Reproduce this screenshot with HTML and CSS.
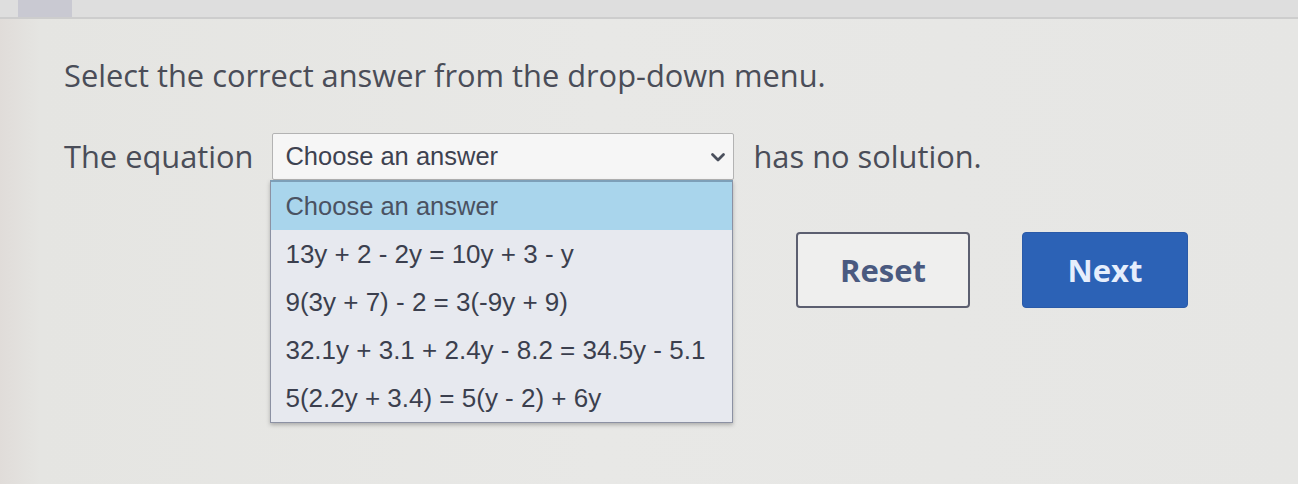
FILE: index.html
```html
<!DOCTYPE html>
<html>
<head>
<meta charset="utf-8">
<link rel="stylesheet" href="styles.css">
</head>
<body>
<div class="topbar"><div class="tab"></div></div>
<main class="content">
  <p class="prompt">Select the correct answer from the drop-down menu.</p>
  <div class="question">
    <span class="label">The equation</span>
    <div class="select-wrap">
      <div class="select">
        <span class="select-text">Choose an answer</span>
        <svg class="chev" width="16" height="11" viewBox="0 0 16 11"><path d="M2.5 2.5 L8 8 L13.5 2.5" fill="none" stroke="#4a4f5c" stroke-width="2.8" stroke-linecap="round" stroke-linejoin="round"/></svg>
      </div>
      <ul class="menu">
        <li class="opt active">Choose an answer</li>
        <li class="opt">13y + 2 - 2y = 10y + 3 - y</li>
        <li class="opt">9(3y + 7) - 2 = 3(-9y + 9)</li>
        <li class="opt">32.1y + 3.1 + 2.4y - 8.2 = 34.5y - 5.1</li>
        <li class="opt">5(2.2y + 3.4) = 5(y - 2) + 6y</li>
      </ul>
    </div>
    <span class="label">has no solution.</span>
  </div>
  <div class="actions">
    <button class="btn btn-reset">Reset</button>
    <button class="btn btn-next">Next</button>
  </div>
</main>
</body>
</html>
```
FILE: styles.css
```css
html, body {
  margin: 0;
  padding: 0;
}
body {
  width: 1298px;
  height: 484px;
  overflow: hidden;
  background: linear-gradient(90deg, #e0dcd9 0px, #e5e5e2 40px, #e8e8e6 600px, #e6e6e4 1298px);
  font-family: "Open Sans", "Noto Sans", sans-serif;
  color: #4a4d58;
}
.topbar {
  height: 17px;
  background: #dedede;
  border-bottom: 2px solid #cdcdcd;
  padding-left: 18px;
}
.tab {
  width: 54px;
  height: 17px;
  background: #c9c9d2;
}
.content {
  padding-left: 64px;
}
.prompt {
  margin: 36px 0 0 0;
  font-size: 30.8px;
  line-height: 40px;
}
.question {
  display: flex;
  align-items: center;
  margin-top: 37px;
  height: 48px;
}
.label {
  font-size: 30.8px;
  line-height: 40px;
}
.select-wrap {
  position: relative;
  margin: 0 19px 0 19px;
}
.select {
  width: 441px;
  height: 45px;
  background: #f6f6f6;
  border: 1px solid #b3b3b3;
  border-radius: 2px;
  display: flex;
  align-items: center;
  justify-content: space-between;
  padding: 0 7px 0 12px;
}
.select-text {
  font-family: "Liberation Sans", Arial, sans-serif;
  font-size: 25.5px;
  color: #3e4250;
}
.chev {
  margin-top: 2px;
}
.menu {
  position: absolute;
  left: -2px;
  top: 47px;
  width: 461px;
  margin: 0;
  padding: 0;
  list-style: none;
  background: #e7e9ef;
  border: 1px solid #8c91a3;
  border-top: 2px solid #7d9fb8;
  box-shadow: 0 2px 4px rgba(0,0,0,0.25);
}
.opt {
  height: 48px;
  line-height: 48px;
  padding-left: 14px;
  font-family: "Liberation Sans", Arial, sans-serif;
  font-size: 26px;
  color: #3b3f4e;
}
.opt.active {
  background: #a9d5ec;
  color: #4a5262;
  font-size: 25.5px;
}
.actions {
  display: flex;
  gap: 52px;
  margin-top: 52px;
  margin-left: 732px;
}
.btn {
  font-family: "Open Sans", "Noto Sans", sans-serif;
  font-weight: 700;
  font-size: 31px;
  border-radius: 4px;
  height: 76px;
  cursor: pointer;
}
.btn-reset {
  width: 174px;
  background: #efefee;
  border: 2px solid #5c5f70;
  color: #4a5a80;
}
.btn-next {
  width: 166px;
  background: #2c62b6;
  border: 1px solid #2a5aa8;
  color: #e6eefc;
}
```
